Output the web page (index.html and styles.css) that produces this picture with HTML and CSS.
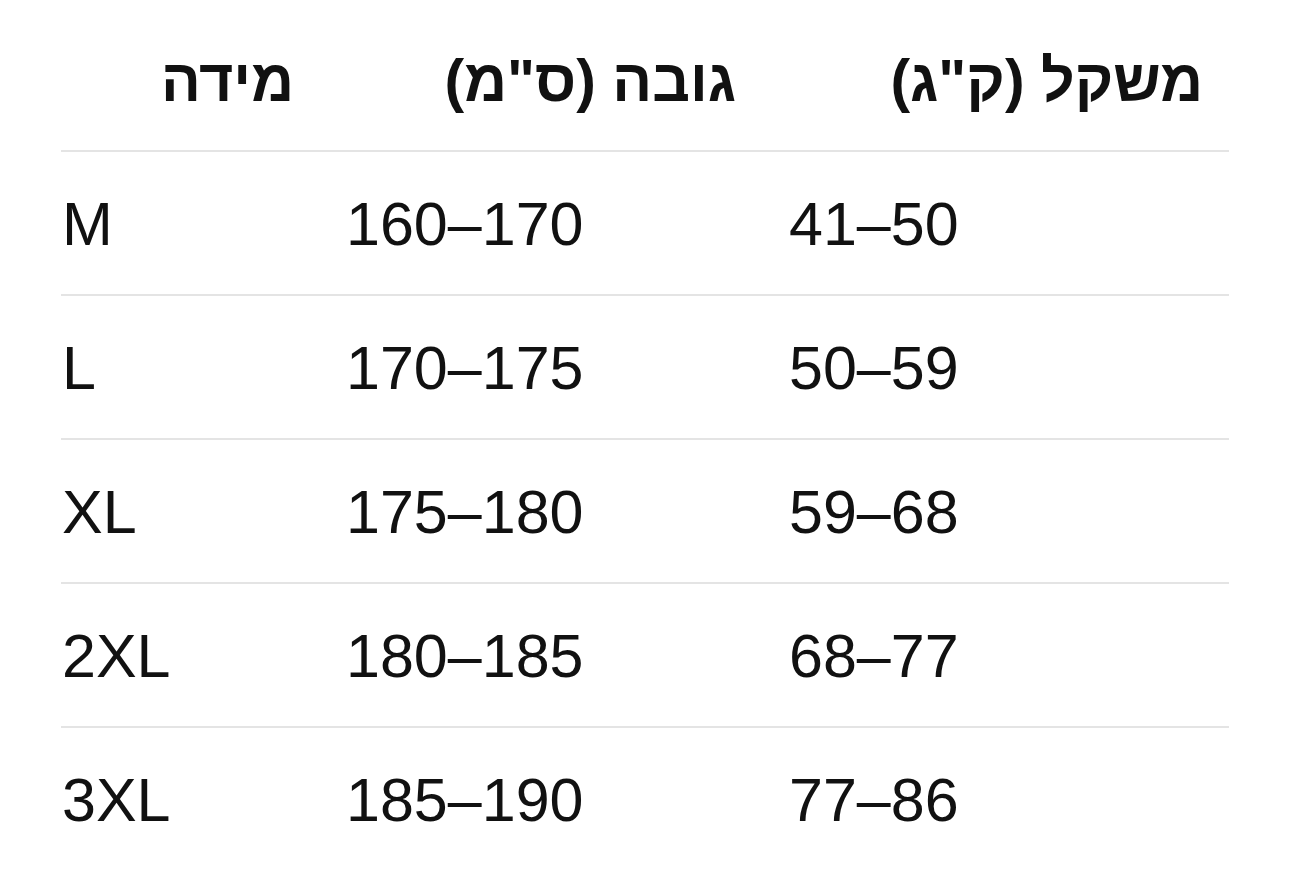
FILE: index.html
```html
<!DOCTYPE html>
<html lang="he">
<head>
<meta charset="utf-8">
<title>טבלת מידות</title>
<link rel="stylesheet" href="styles.css">
</head>
<body>
<div class="page">
  <table class="sizes">
    <colgroup>
      <col class="c1">
      <col class="c2">
      <col class="c3">
    </colgroup>
    <thead>
      <tr>
        <th class="h1" dir="rtl">מידה</th>
        <th class="h2" dir="rtl">גובה (ס"מ)</th>
        <th class="h3" dir="rtl">משקל (ק"ג)</th>
      </tr>
    </thead>
    <tbody>
      <tr><td>M</td><td>160–170</td><td>41–50</td></tr>
      <tr><td>L</td><td>170–175</td><td>50–59</td></tr>
      <tr><td>XL</td><td>175–180</td><td>59–68</td></tr>
      <tr><td>2XL</td><td>180–185</td><td>68–77</td></tr>
      <tr><td>3XL</td><td>185–190</td><td>77–86</td></tr>
    </tbody>
  </table>
</div>
</body>
</html>
```
FILE: styles.css
```css
html, body {
  margin: 0;
  padding: 0;
  background: #ffffff;
}

.page {
  padding: 8px 61px 0 61px;
  font-family: "Liberation Sans", Arial, "DejaVu Sans", sans-serif;
  color: #111111;
}

.sizes {
  width: 1168px;
  border-collapse: collapse;
  table-layout: fixed;
}

.c1 { width: 284px; }
.c2 { width: 443px; }
.c3 { width: 441px; }

.sizes th {
  font-size: 59px;
  font-weight: 700;
  line-height: 70px;
  padding: 38px 0 34px;
  text-align: right;
  border-bottom: 2px solid #e4e4e4;
}

.sizes .h1 { padding-right: 51px; }
.sizes .h2 { padding-right: 52px; }
.sizes .h3 { padding-right: 26px; }

.sizes td {
  font-size: 61px;
  font-weight: 400;
  line-height: 70px;
  padding: 37px 0 35px 1px;
  text-align: left;
  border-bottom: 2px solid #e4e4e4;
}

.sizes tbody tr:last-child td {
  border-bottom: none;
}
```
